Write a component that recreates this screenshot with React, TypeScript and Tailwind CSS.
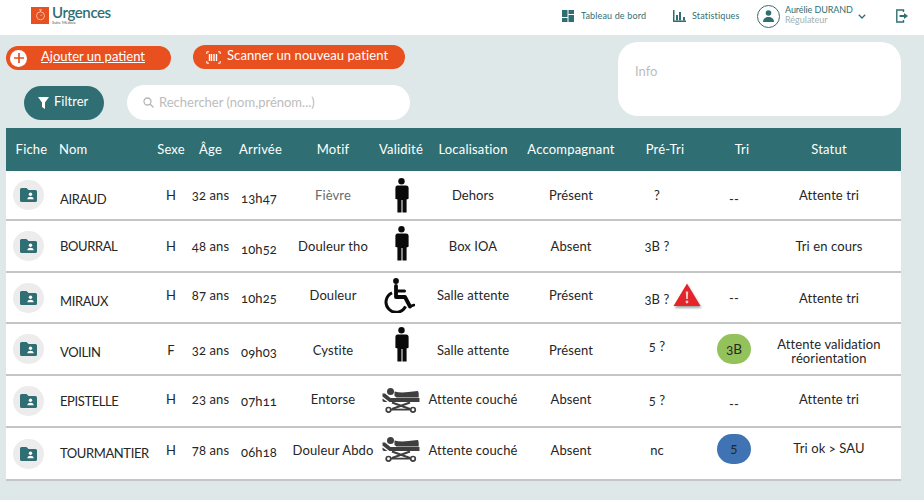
import React from "react";

const TEAL = "#2f6f73";

const off: Record<number, string> = {
  [-6]: "pb-[12px]",
  [-5]: "pb-[10px]",
  [-4]: "pb-[8px]",
  [-3]: "pb-[6px]",
  [-2]: "pb-[4px]",
  [-1]: "pb-[2px]",
  0: "",
  1: "pt-[2px]",
  2: "pt-[4px]",
  3: "pt-[6px]",
  4: "pt-[8px]",
  5: "pt-[10px]",
};

function Person() {
  return (
    <svg width="15" height="35" viewBox="0 0 15 35" fill="#0a0a0a">
      <circle cx="7.5" cy="3.3" r="3.2" />
      <path d="M3 7.5h9a2.6 2.6 0 0 1 2.6 2.6v9.9c0 .8-.5 1.2-1.1 1.2h-.9V34.500h-4.100V22h-1V34.500H3.400V21.200h-.9c-.6 0-1.100-.4-1.100-1.200V10.100A2.600 2.600 0 0 1 3 7.500z" />
    </svg>
  );
}

function Wheelchair() {
  return (
    <svg width="32" height="35" viewBox="0 0 32 35" fill="none" className="mr-[4px]">
      <circle cx="13" cy="3" r="2.900" fill="#0a0a0a" />
      <path d="M13 8v11h9l5 9.500" stroke="#0a0a0a" strokeWidth="3.800" strokeLinecap="round" strokeLinejoin="round" />
      <path d="M13.500 13h8" stroke="#0a0a0a" strokeWidth="3" strokeLinecap="round" />
      <path d="M9 14.800a10.200 10.200 0 1 0 13.500 13.500" stroke="#0a0a0a" strokeWidth="3" />
      <path d="M27 28.500l4-1.500" stroke="#0a0a0a" strokeWidth="2.600" strokeLinecap="round" />
    </svg>
  );
}

function Stretcher() {
  return (
    <svg width="38" height="25" viewBox="0 0 38 25" fill="#3f3f3f">
      <circle cx="8.500" cy="3.500" r="3.500" />
      <path d="M12.500 3.500c4 1.200 9 1.200 14 .6 3-.3 6-1.100 9-1.100.8 0 1.200 1.500 1.200 3v3.500H14.500l-2-1.500z" />
      <path d="M.5 5.500h2.500l5.500 4.500h29v4H7.500L.5 8.500z" />
      <path d="M.5 10.500l5 3.500H2A1.600 1.600 0 0 1 .5 12.500z" />
      <path d="M10 14.500l18 6.500M28 14.500L10 21" stroke="#3f3f3f" strokeWidth="2.200" fill="none" />
      <path d="M9 21.600h20" stroke="#3f3f3f" strokeWidth="1.800" />
      <circle cx="6.500" cy="21.800" r="2.300" fill="#fff" stroke="#3f3f3f" strokeWidth="1.700" />
      <circle cx="31" cy="21.800" r="2.300" fill="#fff" stroke="#3f3f3f" strokeWidth="1.700" />
    </svg>
  );
}

function Warning() {
  return (
    <svg width="29" height="26" viewBox="0 0 29 26" className="[filter:drop-shadow(1px_2px_1px_rgba(0,0,0,0.35))]">
      <path d="M14 0.500L27.500 23H.5z" fill="#e3242b" />
      <path d="M12.800 8.500h2.400l-.4 7.500h-1.600z" fill="#f6c9c9" />
      <circle cx="14" cy="19" r="1.400" fill="#f6c9c9" />
    </svg>
  );
}

function FolderIcon() {
  return (
    <div className="w-[31px] h-[30px] rounded-full bg-[#ececec] flex items-center justify-center">
      <svg width="17" height="14" viewBox="0 0 17 14">
        <path d="M1.500 0h5l2 2h7A1.500 1.500 0 0 1 17 3.500v9a1.500 1.500 0 0 1-1.500 1.500h-14A1.500 1.500 0 0 1 0 12.500v-11A1.500 1.500 0 0 1 1.500 0z" fill={TEAL} />
        <circle cx="10.500" cy="6.300" r="1.700" fill="#fff" />
        <path d="M7.300 11.300c0-1.900 1.700-2.600 3.200-2.600s3.200.7 3.200 2.600z" fill="#fff" />
      </svg>
    </div>
  );
}

type Cell = [string, number];
type Row = {
  name: Cell;
  sex: Cell;
  age: Cell;
  arr: Cell;
  motif: Cell;
  motifGray?: boolean;
  icon: "p" | "w" | "s";
  iconOff: number;
  loc: Cell;
  acc: Cell;
  pre: Cell;
  warn?: boolean;
  tri: Cell;
  triBg?: string;
  statut: Cell;
  h: string;
};

const rows: Row[] = [
  { h: "h-[50px]", name: ["AIRAUD", 4], sex: ["H", 0], age: ["32 ans", 0], arr: ["13h47", 3], motif: ["Fièvre", 0], motifGray: true, icon: "p", iconOff: 0, loc: ["Dehors", 0], acc: ["Présent", 0], pre: ["?", 0], tri: ["--", 4], statut: ["Attente tri", 0] },
  { h: "h-[52px]", name: ["BOURRAL", 0], sex: ["H", 0], age: ["48 ans", 0], arr: ["10h52", 3], motif: ["Douleur tho", 0], icon: "p", iconOff: -3, loc: ["Box IOA", 0], acc: ["Absent", 0], pre: ["3B ?", 0], tri: ["", 0], statut: ["Tri en cours", 0] },
  { h: "h-[51px]", name: ["MIRAUX", 3], sex: ["H", -3], age: ["87 ans", -3], arr: ["10h25", 0], motif: ["Douleur", -3], icon: "w", iconOff: -2, loc: ["Salle attente", -3], acc: ["Présent", -3], pre: ["3B ?", 1], warn: true, tri: ["--", 0], statut: ["Attente tri", 0] },
  { h: "h-[52px]", name: ["VOILIN", 3], sex: ["F", 1], age: ["32 ans", 1], arr: ["09h03", 3], motif: ["Cystite", 1], icon: "p", iconOff: -5, loc: ["Salle attente", 1], acc: ["Présent", 1], pre: ["5 ?", -3], tri: ["3B", 0], triBg: "bg-[#93c25b]", statut: ["Attente validation réorientation", 2] },
  { h: "h-[52px]", name: ["EPISTELLE", 0], sex: ["H", -2], age: ["23 ans", -2], arr: ["07h11", 0], motif: ["Entorse", -2], icon: "s", iconOff: -1, loc: ["Attente couché", -2], acc: ["Absent", -2], pre: ["5 ?", -1], tri: ["--", 3], statut: ["Attente tri", -2] },
  { h: "h-[53px]", name: ["TOURMANTIER", -1], sex: ["H", -4], age: ["78 ans", -4], arr: ["06h18", -2], motif: ["Douleur Abdo", -4], icon: "s", iconOff: -4, loc: ["Attente couché", -4], acc: ["Absent", -4], pre: ["nc", -4], tri: ["5", -5], triBg: "bg-[#3f73b3]", statut: ["Tri ok > SAU", -6] },
];

const GRID =
  "grid grid-cols-[48px_101px_32px_47px_50px_98px_38px_106px_90px_82px_72px_118px] items-center";

function C({ v, cls }: { v: Cell; cls?: string }) {
  return (
    <div className={`${off[v[1]]} ${cls ?? "text-center"} leading-[14px] whitespace-nowrap`}>
      {v[0]}
    </div>
  );
}

export default function App() {
  return (
    <div className="w-[924px] h-[500px] overflow-hidden bg-[#dfe8e8] font-['Lato','Liberation_Sans',sans-serif] text-[#262626] oldstyle-nums">
      <header className="h-[35px] bg-white flex items-center justify-between pl-[31px] pr-[16px]">
        <div className="flex items-center gap-[3px] pb-[5px]">
          <div className="w-[18px] h-[17px] bg-[#e8501f] flex items-center justify-center">
            <svg width="11" height="12" viewBox="0 0 11 12" fill="none" stroke="#f7b79f" strokeWidth="1">
              <circle cx="5.500" cy="6.800" r="4" />
              <path d="M4 .8h3M5.500 1v2M5.500 7l1.500-1.500" />
            </svg>
          </div>
          <div className="flex flex-col">
            <span className="text-[15px] leading-[15px] font-semibold tracking-[-0.4px] text-[#2f6f73]">Urgences</span>
            <span className="text-[4px] leading-[5px] text-[#555]">Suite Médisia</span>
          </div>
        </div>
        <div className="flex items-center text-[9px] text-[#2f6f73] pb-[3px]">
          <svg width="12" height="12" viewBox="0 0 12 12" fill="#2f6f73">
            <rect x="0" y="0" width="5.500" height="7" />
            <rect x="6.500" y="0" width="5.500" height="4" />
            <rect x="0" y="8" width="5.500" height="4" />
            <rect x="6.500" y="5" width="5.500" height="7" />
          </svg>
          <span className="ml-[7px] w-[92px] tracking-[0.15px]">Tableau de bord</span>
          <svg width="13" height="12" viewBox="0 0 13 12" fill="#2f6f73">
            <rect x="0" y="0" width="1.500" height="11" />
            <rect x="0" y="10.500" width="13" height="1.500" />
            <rect x="3" y="5" width="2" height="5.500" />
            <rect x="6" y="2" width="2" height="8.500" />
            <rect x="10" y="7" width="2" height="3.500" />
          </svg>
          <span className="ml-[6px] w-[65px] tracking-[0.15px]">Statistiques</span>
          <div className="w-[23px] h-[23px] rounded-full border border-[#2f6f73] flex items-center justify-center">
            <svg width="11" height="12" viewBox="0 0 11 12" fill="#2f6f73">
              <circle cx="5.500" cy="3" r="2.800" />
              <path d="M0 12c0-3.500 2.500-5 5.500-5s5.500 1.500 5.500 5z" />
            </svg>
          </div>
          <div className="ml-[5px] w-[73px] flex flex-col leading-[10px] pb-[2px]">
            <span className="whitespace-nowrap tracking-[-0.1px]">Aurélie DURAND</span>
            <span className="text-[#9fb2b2]">Régulateur</span>
          </div>
          <svg width="8" height="5" viewBox="0 0 8 5" fill="none" stroke="#2f6f73" strokeWidth="1.300">
            <path d="M.8.8L4 4l3.200-3.200" />
          </svg>
          <svg className="ml-[30px]" width="12" height="14" viewBox="0 0 12 14" fill="none" stroke="#2f6f73" strokeWidth="1.400">
            <path d="M7.500 3V1H.8v12h6.700v-2" />
            <path d="M3.500 7h5" strokeWidth="2" />
            <path d="M8 4l4 3-4 3z" fill="#2f6f73" stroke="none" />
          </svg>
        </div>
      </header>

      <div className="h-[93px] flex justify-between pl-[6px] pr-[23px]">
        <div className="flex flex-col">
          <div className="flex items-start pt-[10px]">
            <button className="mt-[1px] w-[165px] h-[24px] rounded-full bg-[#e8501f] flex items-center pl-[4px] text-white text-[13px]">
              <span className="w-[17px] h-[17px] rounded-full bg-white flex items-center justify-center">
                <svg width="10" height="10" viewBox="0 0 10 10" stroke="#e8501f" strokeWidth="1.700">
                  <path d="M5 0v10M0 5h10" />
                </svg>
              </span>
              <span className="ml-[14px] underline pb-[2px]">Ajouter un patient</span>
            </button>
            <button className="ml-[22px] w-[212px] h-[24px] rounded-full bg-[#e8501f] flex items-center pl-[13px] text-white text-[13px]">
              <svg width="15" height="13" viewBox="0 0 15 13" fill="none" stroke="#fff">
                <path d="M3 .8H.8V3M12 .8h2.200V3M3 12.200H.8V10M12 12.200h2.200V10" />
                <path d="M3.500 3v7M5.500 3v7M8 3v7M10.500 3v7" strokeWidth="1.400" />
              </svg>
              <span className="ml-[6px] tracking-[0.08px] whitespace-nowrap pb-[2px]">Scanner un nouveau patient</span>
            </button>
          </div>
          <div className="flex items-center mt-[15px] pl-[18px]">
            <button className="w-[80px] h-[34px] rounded-full bg-[#2f6f73] flex items-center pl-[14px] text-white text-[13px]">
              <svg width="11" height="12" viewBox="0 0 11 12" fill="#fff">
                <path d="M0 0h11L7 5.500V12L4 10V5.500z" />
              </svg>
              <span className="ml-[5px] pb-[1px]">Filtrer</span>
            </button>
            <div className="ml-[23px] w-[283px] h-[35px] rounded-full bg-white flex items-center pl-[16px] text-[13px] text-[#bcbcbc]">
              <svg width="11" height="11" viewBox="0 0 11 11" fill="none" stroke="#b5b5b5" strokeWidth="1.300">
                <circle cx="4.500" cy="4.500" r="3.500" />
                <path d="M7 7l3.500 3.500" />
              </svg>
              <span className="ml-[5px]">Rechercher (nom,prénom...)</span>
            </div>
          </div>
        </div>
        <div className="mt-[7px] w-[283px] h-[74px] rounded-[20px] bg-white pl-[17px] pt-[21px] text-[13px] leading-[16px] text-[#bdbdbd]">
          Info
        </div>
      </div>

      <div className="mx-[6px] w-[895px] text-[13px] tracking-[0.1px]">
        <div className={`${GRID} h-[43px] bg-[#2f6f73] text-white tracking-[0.2px]`}>
          <div className="text-center pl-[3px]">Fiche</div>
          <div className="pl-[5px]">Nom</div>
          <div className="text-center">Sexe</div>
          <div className="text-center">Âge</div>
          <div className="text-center pl-[3px]">Arrivée</div>
          <div className="text-center">Motif</div>
          <div className="flex justify-center whitespace-nowrap">Validité</div>
          <div className="text-center">Localisation</div>
          <div className="text-center whitespace-nowrap">Accompagnant</div>
          <div className="text-center pl-[16px]">Pré-Tri</div>
          <div className="text-center pl-[16px]">Tri</div>
          <div className="text-center">Statut</div>
        </div>
        <div className="bg-white">
          {rows.map((r) => (
            <div key={r.name[0]} className={`${GRID} ${r.h} border-b-2 border-[#c4c6c6]`}>
              <div className="pl-[7px]">
                <FolderIcon />
              </div>
              <C v={r.name} cls="pl-[6px] text-left tracking-[-0.4px]" />
              <C v={r.sex} />
              <C v={r.age} />
              <C v={r.arr} />
              <C v={r.motif} cls={r.motifGray ? "text-center text-[#6b6b6b]" : "text-center"} />
              <div className={`${off[r.iconOff]} flex justify-center`}>
                {r.icon === "p" ? <Person /> : r.icon === "w" ? <Wheelchair /> : <Stretcher />}
              </div>
              <C v={r.loc} />
              <C v={r.acc} />
              {r.warn ? (
                <div className={`${off[r.pre[1]]} relative text-center leading-[14px]`}>
                  <span>{r.pre[0]}</span>
                  <div className="absolute left-[57px] top-[-7px]">
                    <Warning />
                  </div>
                </div>
              ) : (
                <C v={r.pre} />
              )}
              {r.triBg ? (
                <div className={`${off[r.tri[1]]} flex justify-center`}>
                  <div className={`${r.triBg} w-[34px] h-[30px] rounded-full flex items-center justify-center text-[13.500px]`}>
                    {r.tri[0]}
                  </div>
                </div>
              ) : (
                <C v={r.tri} />
              )}
              <div className={`${off[r.statut[1]]} text-center leading-[14px]`}>{r.statut[0]}</div>
            </div>
          ))}
        </div>
      </div>
    </div>
  );
}
